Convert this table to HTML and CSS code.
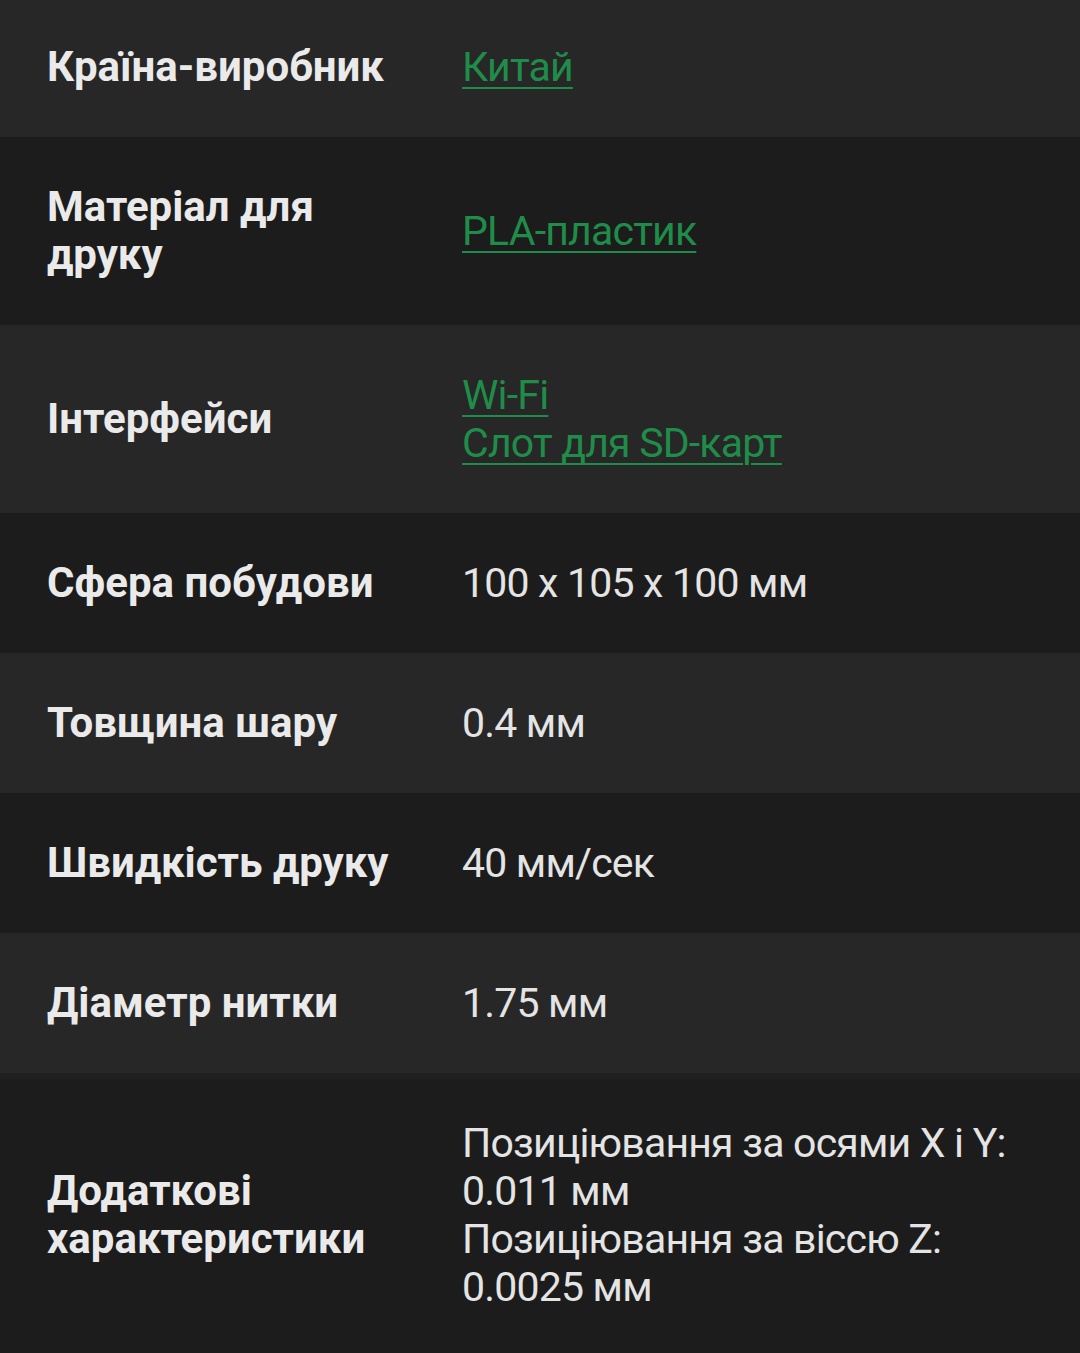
FILE: index.html
```html
<!DOCTYPE html>
<html lang="uk">
<head>
<meta charset="utf-8">
<link rel="stylesheet" href="styles.css">
</head>
<body>
<div class="specs">
  <div class="row light">
    <div class="label">Країна-виробник</div>
    <div class="value"><a href="#">Китай</a></div>
  </div>
  <div class="row dark">
    <div class="label">Матеріал для друку</div>
    <div class="value"><a href="#">PLA-пластик</a></div>
  </div>
  <div class="row light">
    <div class="label">Інтерфейси</div>
    <div class="value"><a href="#">Wi-Fi</a><br><a href="#">Слот для SD-карт</a></div>
  </div>
  <div class="row dark">
    <div class="label">Сфера побудови</div>
    <div class="value">100 x 105 x 100 мм</div>
  </div>
  <div class="row light">
    <div class="label">Товщина шару</div>
    <div class="value">0.4 мм</div>
  </div>
  <div class="row dark">
    <div class="label">Швидкість друку</div>
    <div class="value">40 мм/сек</div>
  </div>
  <div class="row light">
    <div class="label">Діаметр нитки</div>
    <div class="value">1.75 мм</div>
  </div>
  <div class="row dark last">
    <div class="label">Додаткові характеристики</div>
    <div class="value">Позиціювання за осями X і Y: 0.011 мм<br>Позиціювання за віссю Z: 0.0025 мм</div>
  </div>
</div>
</body>
</html>
```
FILE: styles.css
```css
html, body {
  margin: 0;
  padding: 0;
  background: #1c1c1c;
}
body {
  font-family: Roboto, "Noto Sans", sans-serif;
  overflow: hidden;
}
.specs {
  display: flex;
  flex-direction: column;
  margin-top: -3px;
}
.row {
  display: grid;
  grid-template-columns: 415px 1fr;
  align-items: center;
  padding: 46px 40px 46px 47px;
  line-height: 48px;
}
.light { background: #272727; }
.dark { background: #1c1c1c; }
.last { border-top: 6px solid #202020; padding-top: 40px; }
.label {
  font-size: 42px;
  font-weight: 700;
  color: #eaeaea;
  padding-right: 45px;
}
.value {
  font-size: 41px;
  letter-spacing: -0.8px;
  color: #e4e4e4;
}
.value a {
  color: #1f8d49;
  text-decoration: underline;
  text-decoration-thickness: 2px;
  text-underline-offset: 6px;
}
```
